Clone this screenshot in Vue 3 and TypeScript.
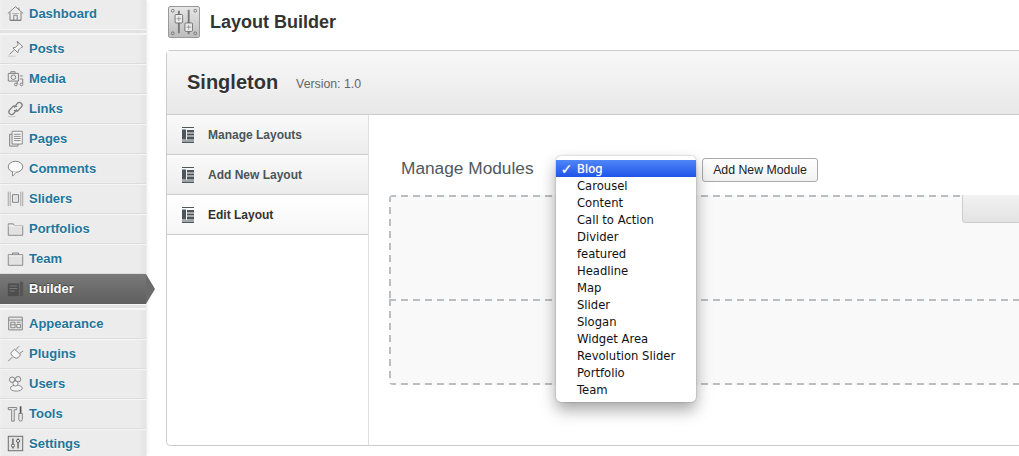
<template>
  <div class="page">
    <nav class="sidebar">
      <template v-for="item in menu" :key="item.label">
        <a :class="['menu-item', { current: item.current, first: item.first, last: item.last }]">
          <svg class="menu-icon" viewBox="0 0 20 20" v-html="item.icon"></svg>
          <span>{{ item.label }}</span>
        </a>
        <div v-if="item.gap" class="menu-gap"></div>
      </template>
    </nav>

    <main class="main">
      <header class="page-head">
        <div class="head-icon">
          <svg viewBox="0 0 32 32" width="30" height="30">
            <circle cx="4" cy="4" r="1.500" fill="none" stroke="#666" stroke-width=".8" />
            <circle cx="28" cy="4" r="1.500" fill="none" stroke="#666" stroke-width=".8" />
            <circle cx="4" cy="28" r="1.500" fill="none" stroke="#666" stroke-width=".8" />
            <circle cx="28" cy="28" r="1.500" fill="none" stroke="#666" stroke-width=".8" />
            <rect x="9.500" y="4" width="2" height="24" fill="#777" />
            <rect x="20" y="3" width="2" height="26" fill="#777" />
            <rect x="6.500" y="8" width="8" height="9" rx="1" fill="#eee" stroke="#555" stroke-width=".8" />
            <rect x="17" y="17" width="8" height="9" rx="1" fill="#eee" stroke="#555" stroke-width=".8" />
            <path d="M8 12.500h5M10.500 10v5M18.500 21.500h5M21 19v5" stroke="#888" stroke-width=".8" />
          </svg>
        </div>
        <h1>Layout Builder</h1>
      </header>

      <section class="panel">
        <div class="panel-head">
          <h2>Singleton</h2>
          <span class="version">Version: 1.0</span>
        </div>
        <div class="panel-body">
          <ul class="tabs">
            <li v-for="tab in tabs" :key="tab" :class="['tab', { active: tab === 'Edit Layout' }]">
              <svg class="tab-icon" viewBox="0 0 14 16" width="14" height="16">
                <path d="M1 .5h12M1 14h12M1 15.500h12" stroke="#4c565c" fill="none" />
                <rect x="1" y="2.500" width="4" height="10" fill="#4c565c" />
                <path d="M6 3h7v2.500H6zM6 6.500h7v2H6zM6 9.500h7v3H6z" fill="#4c565c" />
              </svg>
              <span>{{ tab }}</span>
            </li>
          </ul>

          <div class="content">
            <div class="toolbar">
              <h3>Manage Modules</h3>
              <ul class="select-menu">
                <li v-for="mod in modules" :key="mod" :class="{ selected: mod === 'Blog' }">
                  <span class="check">{{ mod === 'Blog' ? '✓' : '' }}</span>{{ mod }}
                </li>
              </ul>
              <button class="add-btn">Add New Module</button>
            </div>
            <div class="drop-zone top">
              <div class="zone-btn"></div>
            </div>
            <div class="drop-zone bottom"></div>
          </div>
        </div>
      </section>
    </main>
  </div>
</template>

<script setup lang="ts">
interface MenuItem {
  label: string
  icon: string
  current?: boolean
  first?: boolean
  last?: boolean
  gap?: boolean
}

const line = 'fill="none" stroke="#7c7c7c" stroke-width="1.1"'

const menu: MenuItem[] = [
  { label: 'Dashboard', first: true, gap: true, icon: `<path d="M1 10 10 2l9 8M3.500 8.500V18h13V8.500M8 18v-6h4v6M14 3v3M6 12h0M3.500 18h13" ${line}/><path d="M6 10h8" stroke="#aaa"/>` },
  { label: 'Posts', icon: `<path d="M12 1.500l6.500 6.500-2 .8-3 3-.8 3.200-5.700-5.700 3.200-.8 3-3z" fill="#f6f6f6" stroke="#7c7c7c" stroke-width="1.100"/><path d="M8 12l-5 5" ${line}/><path d="M1 19h9" stroke="#c4c4c4"/>` },
  { label: 'Media', icon: `<path d="M1.500 4h12v9h-12zM4.500 4V2h5v2" ${line}/><circle cx="7.500" cy="8.500" r="2.700" ${line}/><path d="M15 7h3.500M15 10.500h3.500v5.500M12 13.500v3" ${line}/><circle cx="10.500" cy="17" r="1.600" ${line}/><circle cx="17" cy="17" r="1.600" ${line}/>` },
  { label: 'Links', icon: `<path d="M8.500 9l4-5.500c2.500-2 6.500.8 5 4l-4.500 5c-2 1.200-3.800.5-4.500-.8M11.500 11l-4 5.500c-2.500 2-6.500-.8-5-4l4.500-5c2-1.200 3.800-.5 4.500.8" fill="none" stroke="#7c7c7c" stroke-width="1.500"/><path d="M1 19.500h9" stroke="#c4c4c4"/>` },
  { label: 'Pages', icon: `<path d="M3 5h10v14H3z" fill="#ddd" stroke="#7c7c7c"/><path d="M6 1.500h12v15H6z" fill="#f7f7f7" stroke="#7c7c7c"/><path d="M8 5h8M8 7.500h8M8 10h8M8 12.500h8" stroke="#777"/>` },
  { label: 'Comments', icon: `<ellipse cx="10" cy="8" rx="8.500" ry="6.500" fill="#fafafa" stroke="#7c7c7c" stroke-width="1.100"/><path d="M6.500 14v5l4.500-4.500" fill="#fafafa" stroke="#7c7c7c"/>` },
  { label: 'Sliders', icon: `<path d="M1.500 2v17M3.800 2v17M16.200 2v17M18.500 2v17" stroke="#999"/><path d="M6.500 5.500h7v9h-7z" ${line}/><path d="M8.500 7.500h3v5h-3z" fill="#ddd"/>` },
  { label: 'Portfolios', icon: `<path d="M1.500 18V4.500h6l1 2h10V18z" fill="#e2e2e2" stroke="#7c7c7c"/><path d="M1.500 7h17" stroke="#fafafa"/>` },
  { label: 'Team', icon: `<path d="M1.500 18V5.500h17V18z" fill="#e2e2e2" stroke="#7c7c7c"/><path d="M6.500 5.500v-2h7v2" ${line}/><path d="M2 7h16" stroke="#fafafa"/>` },
  { label: 'Builder', current: true, gap: true, icon: `<rect x="1" y="4" width="13" height="15" fill="#4e4e4e"/><path d="M3 7h9M3 10h9M3 13h6" stroke="#7e7e7e"/><rect x="15" y="2" width="4" height="17" fill="#555"/>` },
  { label: 'Appearance', icon: `<path d="M2 2.500h16v15H2zM2 6h16M4.500 8.500h5v6.500h-5zM11.500 11h4.500v4h-4.500zM11.500 8.500H16M4.500 11.500h5" ${line}/>` },
  { label: 'Plugins', icon: `<path d="M9 5l7 6.500-3 3.500c-2.500 1.200-4.500 0-6.500-2S4 9 6 7.500z" fill="#f6f6f6" stroke="#7c7c7c" stroke-width="1.100"/><path d="M6.500 14 1.500 19M10.500 5.500 14 1.500M15 10l4-3" ${line}/>` },
  { label: 'Users', icon: `<circle cx="6" cy="5.500" r="3.200" ${line}/><circle cx="13" cy="5" r="3.200" ${line}/><ellipse cx="11" cy="15.500" rx="7" ry="3.500" fill="#f4f4f4" stroke="#7c7c7c"/><circle cx="10" cy="10" r="3" fill="#f4f4f4" stroke="#7c7c7c"/>` },
  { label: 'Tools', icon: `<path d="M1.500 3h10v2.500H8.500V19h-3V5.500h-4zM14 10h4v7a2 2 0 0 1-4 0z" ${line}/><rect x="15" y="1.500" width="2" height="8" fill="#555"/>` },
  { label: 'Settings', last: true, icon: `<rect x="1.500" y="1.500" width="17" height="17" fill="#e4e4e4" stroke="#666" stroke-width="1.100"/><path d="M7 4v12M13 4v12" stroke="#444" stroke-width="1.300"/><circle cx="7" cy="12.500" r="1.800" fill="#fff" stroke="#444"/><circle cx="13" cy="7" r="1.800" fill="#fff" stroke="#444"/>` },
]

const tabs = ['Manage Layouts', 'Add New Layout', 'Edit Layout']

const modules = [
  'Blog',
  'Carousel',
  'Content',
  'Call to Action',
  'Divider',
  'featured',
  'Headline',
  'Map',
  'Slider',
  'Slogan',
  'Widget Area',
  'Revolution Slider',
  'Portfolio',
  'Team',
]
</script>

<style>
html,
body {
  margin: 0;
  height: 456px;
  overflow: hidden;
  background: #fff;
}
</style>

<style scoped>
.page {
  display: flex;
  width: 1019px;
  height: 456px;
  overflow: hidden;
  font-family: "Liberation Sans", Arial, sans-serif;
}

.sidebar {
  flex: 0 0 146px;
  height: 456px;
  display: flex;
  flex-direction: column;
  background: linear-gradient(90deg, #f0f0f0 0, #ececec 3px, #ececec 138px, #e4e4e4 146px);
  box-shadow: 1px 0 3px rgba(0, 0, 0, 0.1);
  z-index: 1;
}

.menu-item {
  position: relative;
  flex: 0 0 30px;
  box-sizing: border-box;
  display: flex;
  align-items: center;
  gap: 5px;
  padding-left: 7px;
  font-size: 13px;
  font-weight: 700;
  color: #21759b;
  text-shadow: 0 1px 0 #fff;
  border-bottom: 1px solid #dcdcdc;
  box-shadow: inset 0 1px 0 #f6f6f6;
}

.menu-item.first {
  flex-basis: 29px;
  border-bottom: 0;
  box-shadow: none;
  padding-bottom: 3px;
}

.menu-item.last {
  border-bottom: 0;
  padding-bottom: 1px;
}

.menu-item.current {
  padding-bottom: 1px;
  color: #fff;
  border-bottom: 0;
  background: linear-gradient(#7a7a7a, #5e5e5e);
  box-shadow: none;
  text-shadow: 0 -1px 0 #444, 0 0 2px #444;
}

.menu-item.current::after {
  content: "";
  position: absolute;
  top: 0;
  left: 146px;
  border-style: solid;
  border-width: 15px 0 15px 9px;
  border-color: transparent transparent transparent #6b6b6b;
}

.menu-icon {
  flex: 0 0 17px;
  width: 17px;
  height: 17px;
}

.menu-gap {
  flex: 0 0 5px;
  background: #e2e2e2;
  border-top: 1px solid #f5f5f5;
  border-bottom: 1px solid #f5f5f5;
  box-sizing: border-box;
}

.main {
  flex: 1 1 auto;
  min-width: 0;
  padding: 6px 0 0 20px;
  box-sizing: border-box;
}

.page-head {
  display: flex;
  align-items: center;
  gap: 10px;
  height: 32px;
  padding-left: 2px;
}

.head-icon {
  width: 30px;
  height: 30px;
  border: 1px solid #9a9a9a;
  border-radius: 2px;
  background: linear-gradient(#e6e6e6, #bdbdbd);
}

.page-head h1 {
  margin: 0;
  font-size: 18px;
  font-weight: 700;
  color: #333;
  text-shadow: 0 1px 0 #fff;
}

.panel {
  width: 900px;
  height: 396px;
  margin-top: 12px;
  box-sizing: border-box;
  border: 1px solid #ccc;
  border-radius: 4px 0 0 4px;
  display: flex;
  flex-direction: column;
}

.panel-head {
  flex: 0 0 63px;
  display: flex;
  align-items: center;
  gap: 18px;
  padding-left: 20px;
  border-bottom: 1px solid #ccc;
  background: linear-gradient(#f8f8f8, #e8e8e8);
}

.panel-head h2 {
  margin: 0;
  font-size: 20px;
  font-weight: 700;
  color: #333;
  text-shadow: 0 1px 0 #fff;
}

.version {
  margin-top: 3px;
  font-size: 12.300px;
  color: #666;
}

.panel-body {
  flex: 1;
  display: flex;
  min-height: 0;
}

.tabs {
  flex: 0 0 201px;
  margin: 0;
  padding: 0;
  list-style: none;
  border-right: 1px solid #dedede;
}

.tab {
  height: 39px;
  display: flex;
  align-items: center;
  gap: 13px;
  padding-left: 14px;
  border-bottom: 1px solid #ccc;
  background: linear-gradient(#fafafa, #ececec);
  font-size: 12px;
  font-weight: 700;
  color: #4a545a;
}

.tab.active {
  background: linear-gradient(#fff, #f6f6f6);
  color: #333;
}

.tab-icon {
  flex: none;
}

.content {
  flex: 1;
  min-width: 0;
  padding: 43px 0 0 20px;
}

.toolbar {
  position: relative;
  display: flex;
  align-items: center;
  height: 24px;
  margin-bottom: 13px;
  padding-left: 12px;
}

.toolbar h3 {
  margin: -4px 0 0;
  width: 301px;
  font-size: 17.300px;
  font-weight: 400;
  color: #50585e;
}

.select-menu {
  position: absolute;
  top: -2px;
  left: 167px;
  width: 140px;
  height: 246px;
  margin: 0;
  padding: 4px 0;
  box-sizing: border-box;
  list-style: none;
  background: #fff;
  border-radius: 5px;
  box-shadow: 0 8px 16px rgba(0, 0, 0, 0.35), 0 0 2px rgba(0, 0, 0, 0.3);
  font-family: "DejaVu Sans", sans-serif;
  font-size: 11.600px;
  color: #111;
  z-index: 2;
}

.select-menu li {
  display: flex;
  align-items: center;
  height: 17px;
}

.select-menu li.selected {
  background: linear-gradient(#4f86f7, #1f54e8);
  color: #fff;
  text-shadow: 0 0 1px rgba(255, 255, 255, 0.6);
}

.check {
  width: 21px;
  text-align: center;
  font-size: 14px;
  font-weight: 700;
}

.add-btn {
  width: 116px;
  height: 24px;
  padding: 0;
  box-sizing: border-box;
  border: 1px solid #aaa;
  border-radius: 3px;
  background: linear-gradient(#fff, #f1f1f1);
  font-family: inherit;
  font-size: 12.300px;
  color: #222;
}

/* dashes are longer than the browser's own dashed border */
.drop-zone {
  width: 700px;
  box-sizing: border-box;
  border-radius: 4px;
  background-color: #f9f9f9;
  background-repeat: no-repeat;
  background-image:
    repeating-linear-gradient(90deg, #b9bec2 0 7px, transparent 7px 12px),
    repeating-linear-gradient(180deg, #b9bec2 0 7px, transparent 7px 12px);
  background-size: 100% 2px, 2px 100%;
}

.drop-zone.top {
  height: 104px;
  border-radius: 4px 4px 0 0;
  background-position: 0 0, 0 0;
}

.drop-zone.bottom {
  height: 86px;
  border-radius: 0 0 4px 4px;
  background-image:
    repeating-linear-gradient(90deg, #b9bec2 0 7px, transparent 7px 12px),
    repeating-linear-gradient(90deg, #b9bec2 0 7px, transparent 7px 12px),
    repeating-linear-gradient(180deg, #b9bec2 0 7px, transparent 7px 12px);
  background-size: 100% 2px, 100% 2px, 2px 100%;
  background-position: 0 0, 0 100%, 0 0;
}

.zone-btn {
  width: 100px;
  height: 28px;
  margin-left: 573px;
  box-sizing: border-box;
  border: 1px solid #ccc;
  border-top: 0;
  border-radius: 0 0 0 4px;
  background: linear-gradient(#f2f2f2, #e3e3e3);
}
</style>
